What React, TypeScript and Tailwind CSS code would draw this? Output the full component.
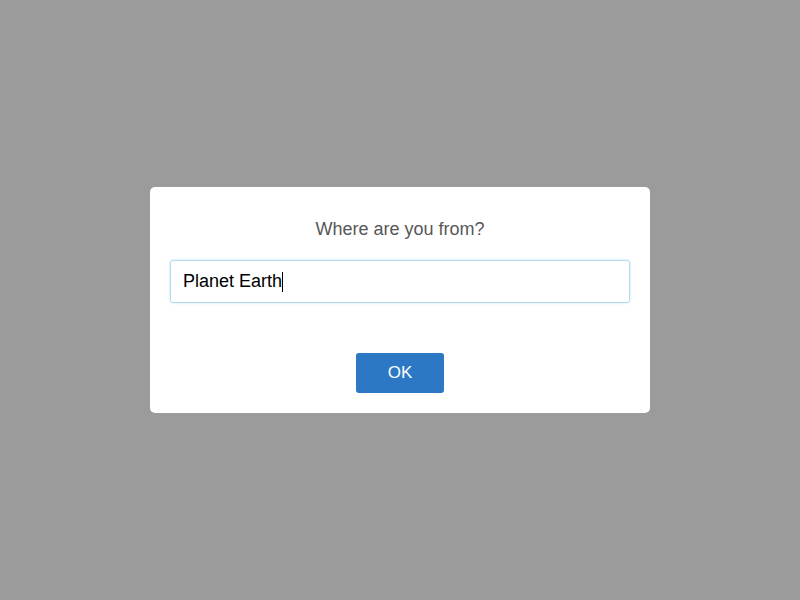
export default function App() {
  return (
    <div className="w-[800px] h-[600px] bg-[#9b9b9b] flex items-center justify-center font-['Liberation_Sans',Arial,sans-serif]">
      <div className="w-[500px] bg-white rounded-[5px] px-[20px] pt-[30px] pb-[20px] flex flex-col items-center">
        <h2 className="h-[24px] leading-[24px] text-[18px] text-[#575757]">Where are you from?</h2>
        <div className="mt-[19px] w-full h-[43px] border border-[#b4dbed] rounded-[3px] shadow-[0_0_3px_#c4e6f5] flex items-center pl-[12px] text-[18px] text-black">
          <span>Planet Earth</span>
          <span className="w-px h-[20px] bg-black" />
        </div>
        <button className="mt-[50px] w-[88px] h-[40px] rounded-[3px] bg-[#2c78c4] text-white text-[17px]">OK</button>
      </div>
    </div>
  );
}
